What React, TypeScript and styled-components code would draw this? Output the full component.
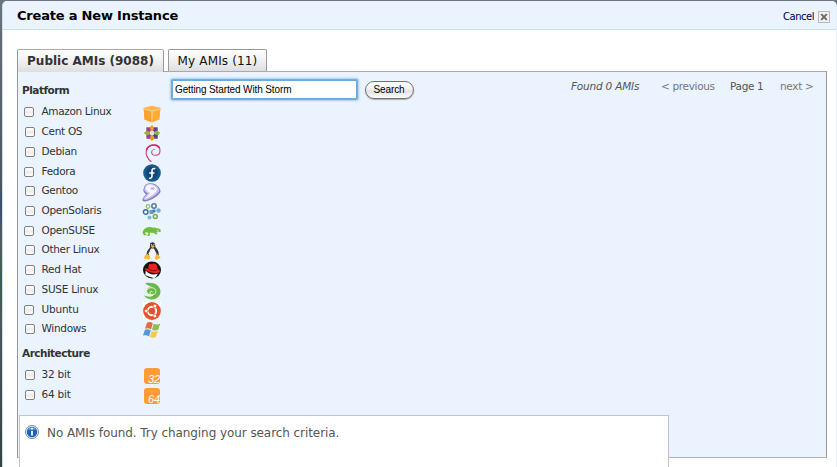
import React from "react";
import styled, { createGlobalStyle } from "styled-components";

const GlobalStyle = createGlobalStyle`
  * { box-sizing: border-box; }
  html, body { margin: 0; padding: 0; overflow: hidden; }
  body { background: #fff; font-family: "DejaVu Sans", Verdana, sans-serif; }
`;

const Backdrop = styled.div`
  width: 837px;
  height: 467px;
  padding: 1px 1px 0 2px;
  overflow: hidden;
  background: linear-gradient(#6b7580 0, #686b70 40px, #50565e 180px, #3c4d6c 205px, #565a5d 240px, #3e6047 280px, #505558 330px, #34443d 467px);
`;

const Dialog = styled.div`
  height: 466px;
  width: 834px;
  background: #fff;
  border-left: 1px solid #c5e0f5;
  border-radius: 5px 5px 0 0;
  box-shadow: 1px 0 0 #e4eef6;
`;

const Header = styled.header`
  display: flex;
  align-items: center;
  justify-content: space-between;
  height: 29px;
  padding: 1px 6px 0 14px;
  background: #eaf3fe;
  border-bottom: 1px solid #c5e0f5;
  border-radius: 5px 5px 0 0;
`;

const Title = styled.h1`
  margin: 0;
  font-size: 13px;
  line-height: 18px;
  letter-spacing: -0.2px;
  color: #000;
`;

const Cancel = styled.button`
  display: flex;
  align-items: center;
  gap: 4px;
  padding: 2px 0 0;
  border: 0;
  background: none;
  font: 10px/14px "DejaVu Sans", sans-serif;
  letter-spacing: -0.5px;
  color: #00004a;
`;

const CloseBox = styled.span`
  display: flex;
  align-items: center;
  justify-content: center;
  width: 12px;
  height: 12px;
  background: #f1f0ee;
  border: 1px solid #b9b9b9;
`;

const Content = styled.main`
  padding: 19px 8px 0 14px;
`;

const Tabs = styled.nav`
  display: flex;
  gap: 4px;
  height: 22px;
`;

const Tab = styled.button<{ $active?: boolean }>`
  width: ${(p) => (p.$active ? 147 : 99)}px;
  height: ${(p) => (p.$active ? 23 : 22)}px;
  padding: ${(p) => (p.$active ? 0 : 1)}px 0 0;
  border: 1px solid #999;
  border-top-color: ${(p) => (p.$active ? "#f2a12e" : "#999")};
  border-bottom: 0;
  border-radius: 2px 2px 0 0;
  background: linear-gradient(#fff, #f2f2f2 45%, #dedede);
  font: ${(p) => (p.$active ? "bold" : "normal")} 12px/18px "DejaVu Sans", sans-serif;
  letter-spacing: ${(p) => (p.$active ? "0" : "0.15px")};
  white-space: nowrap;
  color: ${(p) => (p.$active ? "#333" : "#111")};
`;

const Panel = styled.section`
  width: 810px;
  height: 387px;
  border: 1px solid #999;
  border-top-color: #aaa;
  border-bottom-color: #b2b2b7;
  background: #eaf3fe;
`;

const Columns = styled.div`
  display: flex;
  height: 343px;
`;

const Sidebar = styled.aside`
  width: 152px;
  padding: 10px 0 0 4px;
`;

const GroupTitle = styled.h2<{ $spaced?: boolean }>`
  margin: ${(p) => (p.$spaced ? "6px 0 3px" : "0 0 3px")};
  height: 17px;
  font-size: 10.5px;
  line-height: 17px;
  letter-spacing: -0.5px;
  color: #333;
`;

const Option = styled.label`
  display: grid;
  grid-template-columns: 19.5px 101.5px 18px;
  grid-template-rows: 19.73px;
  align-items: center;
  height: 19.73px;
  font-size: 10.5px;
  line-height: 19px;
  color: #333;
`;

const Checkbox = styled.input<{ $shift: number }>`
  appearance: none;
  width: 10px;
  height: 10px;
  margin: 1px 0 0 ${(p) => 2 + p.$shift}px;
  border: 1px solid #818181;
  border-radius: 2px;
  background: linear-gradient(#fff, #ececec 55%, #fff);
`;

const Label = styled.span<{ $spacing: number }>`
  letter-spacing: ${(p) => p.$spacing}px;
  white-space: nowrap;
`;

const Icon = styled.svg<{ $drop: number }>`
  display: block;
  width: 18px;
  height: 18px;
  margin: ${(p) => p.$drop}px 0 ${(p) => -p.$drop}px;
  overflow: visible;
`;

const Results = styled.div`
  display: flex;
  flex: 1;
  align-items: flex-start;
  padding-top: 8px;
`;

const SearchInput = styled.input`
  width: 185px;
  height: 19px;
  margin-left: 2px;
  padding: 0 2px;
  border: 1px solid #6ea9dc;
  outline: 0;
  border-radius: 1px;
  background: #fff;
  box-shadow: 0 0 0 1px #73aee0, 0 0 2px 2px #a5cdee;
  font: 10px "Liberation Sans", Arial, sans-serif;
  letter-spacing: -0.12px;
  color: #000;
`;

const SearchButton = styled.button`
  width: 49px;
  height: 18px;
  margin: 1px 0 0 7.5px;
  padding: 0;
  border: 1px solid #717171;
  border-radius: 9px;
  background: linear-gradient(#fff, #efefef 48%, #e2e2e2 55%, #fbfbfb);
  box-shadow: 0 1px 1px #aaa;
  font: 10px/14px "Liberation Sans", Arial, sans-serif;
  letter-spacing: -0.1px;
  color: #000;
`;

const Pager = styled.div`
  display: grid;
  grid-template-columns: 90px 69px 50px 33px;
  margin: -1px 13px 0 auto;
  font-size: 10.5px;
  line-height: 15px;
  letter-spacing: -0.33px;
  white-space: nowrap;
  color: #555;
`;

const Found = styled.em`
  letter-spacing: -0.2px;
`;

const PageLink = styled.span`
  color: #777;
`;

const Message = styled.div`
  display: flex;
  align-items: flex-start;
  width: 650px;
  height: 70px;
  margin-left: 1px;
  padding: 9px 0 0 5px;
  gap: 8px;
  border: 1px solid #c4c4c4;
  background: #fff;
  font-size: 12px;
  line-height: 17px;
  letter-spacing: -0.07px;
  color: #555;
`;

const BitBadge = styled.span`
  width: 16px;
  height: 16px;
  margin: 3px 0 -1px 1px;
  padding: 5px 0 0 4px;
  overflow: hidden;
  border-radius: 3px;
  background: #ff9c35;
  font: italic 11px/12px "Liberation Sans", Arial, sans-serif;
  color: #fff;
`;

const centPetals = ["#f0a522", "#6b3f91", "#8db83b", "#454b91", "#e4a12c", "#a84088", "#8db83b", "#a84088"];

const glyphs: Record<string, React.ReactNode> = {
  amazon: (
    <>
      <path d="m.5 3 8.5-2 8.5 2-1 11.5L9 17.5 1.5 14.5Z" fill="#ffab35" />
      <path d="m.5 3 8.5-2 8.5 2L9 5.5Z" fill="#ffb74a" />
      <path d="m1 4 7.5 2v11.2l-7-2.7Z" fill="#fba22d" />
      <path d="m1 4 8 2 8-2M9 6v11" stroke="#ffe1b0" strokeWidth=".8" fill="none" />
    </>
  ),
  cent: (
    <>
      <path fill="#fff" d="m9 0 3 2h4v4l2 3-2 3v4h-4l-3 2-3-2H2v-4L0 9l2-3V2h4Z" />
      {centPetals.map((color, index) => (
        <path key={index} d="m9 .8 2.6 2.8L9.6 7.2H8.4L6.4 3.6Z" fill={color} transform={`rotate(${index * 45} 9 9)`} />
      ))}
      <path d="M7 7h4v4H7z" fill="#e7dcea" opacity=".9" />
    </>
  ),
  debian: (
    <>
      <path d="M8 17.5C5 15 2.7 12 3.2 7.5 3.6 3.5 7 .8 11 1c3.5.2 6 2.3 6 5.5 0 3-2 4.8-4.5 4.8-2.7 0-4.2-1.5-3.8-3.4" fill="none" stroke="#d83a76" strokeWidth="1.1" strokeLinecap="round" />
      <path d="M3.5 6C4.5 3 7.5 1 11 1c2.5 0 4.5 1 5.5 3" fill="none" stroke="#d4286b" strokeWidth="1.6" />
      <path d="M8.7 8c.2-1.7 1.5-3 3.2-2.5" fill="none" stroke="#df5d8d" />
    </>
  ),
  fedora: (
    <>
      <circle cx="9" cy="9" r="8.8" fill="#17598c" />
      <circle cx="9" cy="9" r="6" fill="#114778" />
      <path d="M12.3 4.8C10 4 9 5.2 9 7v5c0 2-1.4 2.5-2.8 2M6.3 9h5.2" fill="none" stroke="#fff" strokeWidth="1.6" />
    </>
  ),
  gentoo: (
    <>
      <path d="M1 5C1 1 6-.5 10 .5c4 1 8 5 7.5 8.5C15.5 13 7 18.5 1 18.5c-3-1-1-4 2-7C1 9.5-.5 8 1 5Z" fill="#817bbb" />
      <path d="M1.5 5C2 1 7 0 10 1.2c3.5 1 6.8 4 6.4 6.7C14 12 6 17 1.2 17c-2-1 .8-3.8 3.8-6.5C2.5 9.5.5 7.5 1.5 5Z" fill="#c5c1ee" />
      <path d="M2.5 5C4 1.5 7 1 10 2.2c3 1.3 4.5 3 4 5C12 11 6 14.5 2 16c1-2 3.5-4 5.5-6C4.5 9 2.5 7.5 2.5 5Z" fill="#f6f5ff" />
      <ellipse cx="9.5" cy="5.5" rx="2" ry="1.2" fill="#b9b4e2" />
    </>
  ),
  solaris: (
    <>
      <circle cx="5" cy="3.5" r="1.8" fill="none" stroke="#9abd66" strokeWidth="1.2" />
      <circle cx="11" cy="3" r="2.2" fill="none" stroke="#547d94" strokeWidth="1.5" />
      <circle cx="2.7" cy="9" r="2.3" fill="none" stroke="#397096" strokeWidth="1.4" />
      <path d="M6.5 7h4v4h-4z" fill="#426e99" opacity=".7" />
      <circle cx="15.5" cy="7.5" r="2.2" fill="#70b0dd" />
      <circle cx="11" cy="8" r="1.7" fill="#4187b5" />
      <circle cx="6.5" cy="14.5" r="2" fill="#7db8df" />
      <circle cx="12.3" cy="13.5" r="2" fill="none" stroke="#7cab46" strokeWidth="1.5" />
    </>
  ),
  opensuse: (
    <>
      <path d="M0 8C2 4 7 3 11 5l1-1 1 1.5c3-1 5 1 5 3-2 1-4 0-5 1.5 2 0 2 2 0 1.5L11 10l-4-.5L6.5 13H4l1.5-2c0-2-3.5-2.5-3.5-.5l2 1-2 1C0 12-1 10 0 8Z" fill="#6fbd38" />
      <circle cx="15" cy="7.7" r=".9" fill="#e5f7da" />
      <circle cx="15.2" cy="7.7" r=".4" fill="#244b1c" />
    </>
  ),
  tux: (
    <>
      <path d="M7.2 1c3.6-2 5.3.3 5.2 4.2 3 2.6 4 6 3 9.8H3.8c-1-3.3.2-6.5 3-9.3Z" fill="#35373a" />
      <path d="m8 6.5-2.4 4.8 1 4.7 3 1 3-1 .9-4.5-2.6-5Z" fill="#f3f3f3" />
      <path d="m7.7 4.4 2.1-1.1 2 1-2 1.6ZM4 11.5l3 3 .4 2-2.1 1.3L.5 16l1.5-2.5ZM14 11.7l3.7 3.8-4 2.5-2.3-2Z" fill="#f4bd38" />
      <path d="M8.4 2.2v1.3M10.9 2.2v1.1" stroke="#fff" strokeWidth=".9" />
    </>
  ),
  redhat: (
    <>
      <ellipse cx="9" cy="9" rx="9" ry="8.5" fill="#111" />
      <path d="M2.7 9.6c3 4.2 8.5 4.6 12 3.2-.5 2-1.7 3.2-3.8 4.4C8.5 16.3 6.5 15.5 2.3 14.2Z" fill="#fff" />
      <path d="M1.5 8c1-1 2.5-.8 3.5-.2L6 3.4c1-1.3 2.4.2 3.3-.2.9-1.4 4-.3 4.5 1L14.7 8c3 1.5 2.8 3.6-.7 4C9.5 12.5 4 10.7 1.5 8Z" fill="#ed2024" />
      <path d="M5 7.7c2.7 2.1 6 2.6 9.2 1.1" stroke="#68090d" strokeWidth=".8" fill="none" />
    </>
  ),
  suse: (
    <>
      <path d="M2.3 1C10-.5 17.5 3 17.5 9.5c0 6.7-8 10-14 6.6L1 13.5c5.3 2 9.3 1.3 10.2-1.8C9 13.5 4.5 12.2 4 9.8 3.2 7 5.2 5 9 4.5 6.2 4.2 4 3.5 2.3 1Z" fill="#69b944" />
      <path d="M3.5 9.5C3.7 6.7 6.6 5.2 9.5 5.8c3.5.7 4.3 4.5 2 6.2-1.7 1.4-4.5.8-4.6-1.1 0-1.6 2.1-2 2.7-.8" fill="none" stroke="#eaf6e4" strokeWidth="1" />
    </>
  ),
  ubuntu: (
    <>
      <path d="M0 0h18v18H0z" fill="#fff" />
      <circle cx="9" cy="9" r="8.9" fill="#e6512c" />
      <circle cx="9" cy="9" r="4.2" fill="none" stroke="#fff" strokeWidth="1.9" />
      {[30, 150, 270].map((angle) => (
        <g key={angle} transform={`rotate(${angle} 9 9)`}>
          <path d="M9 3v4" stroke="#e6512c" />
          <circle cx="9" cy="3.3" r="1.8" fill="#fff" stroke="#e6512c" strokeWidth=".7" />
        </g>
      ))}
    </>
  ),
  windows: (
    <>
      <path d="M4 1.7C6 .5 8 1 9.8 2.2L8 8.5C6 7 4 7 2 7.8Z" fill="#e76b3c" />
      <path d="M10.7 2.8c2 1 4 1 6.5 0l-2 6c-2 1-4 1-6.2 0Z" fill="#91bd4b" />
      <path d="M1.8 8.9c2-1 4-.5 6 .7l-1.8 6c-2-1.5-4-1.7-6-1Z" fill="#5897d7" />
      <path d="M8.7 10c2 1 4 1 6.2 0l-2 6c-2 1-4 1-6 0Z" fill="#f3c950" />
    </>
  ),
};

const platforms = [
  { label: "Amazon Linux", icon: "amazon", spacing: -0.35, drop: 2, shift: 0 },
  { label: "Cent OS", icon: "cent", spacing: -0.3, drop: 1, shift: 1 },
  { label: "Debian", icon: "debian", spacing: -0.3, drop: 1.5, shift: 1 },
  { label: "Fedora", icon: "fedora", spacing: -0.3, drop: 1.5, shift: 0 },
  { label: "Gentoo", icon: "gentoo", spacing: -0.3, drop: 1, shift: 1 },
  { label: "OpenSolaris", icon: "solaris", spacing: -0.3, drop: 2, shift: 1 },
  { label: "OpenSUSE", icon: "opensuse", spacing: -0.3, drop: 1.5, shift: 0 },
  { label: "Other Linux", icon: "tux", spacing: -0.32, drop: 1.5, shift: 1 },
  { label: "Red Hat", icon: "redhat", spacing: -0.25, drop: 0.5, shift: 1 },
  { label: "SUSE Linux", icon: "suse", spacing: -0.25, drop: 2, shift: 1 },
  { label: "Ubuntu", icon: "ubuntu", spacing: -0.2, drop: 1.5, shift: 0 },
  { label: "Windows", icon: "windows", spacing: -0.3, drop: 1.5, shift: 1 },
];

function InfoIcon() {
  return (
    <svg width="14" height="14" viewBox="0 0 14 14">
      <circle cx="7" cy="7" r="6.5" fill="#e8eef5" stroke="#7e8b9b" />
      <circle cx="7" cy="7" r="5.2" fill="#1763c1" />
      <path d="M3 5a4.5 4.5 0 0 1 8 0C8 4 6 4 3 5Z" fill="#7baee0" />
      <path d="M7 5.8v4.8M7 2.7v1.8" fill="none" stroke="#fff" strokeWidth="1.8" />
    </svg>
  );
}

export default function App() {
  return (
    <>
      <GlobalStyle />
      <Backdrop>
        <Dialog>
          <Header>
            <Title>Create a New Instance</Title>
            <Cancel>
              Cancel
              <CloseBox>
                <svg width="8" height="8" viewBox="0 0 8 8">
                  <path d="m1.2 1.2 5.6 5.6m0-5.6L1.2 6.8" stroke="#666" strokeWidth="1.8" />
                </svg>
              </CloseBox>
            </Cancel>
          </Header>
          <Content>
            <Tabs>
              <Tab $active>Public AMIs (9088)</Tab>
              <Tab>My AMIs (11)</Tab>
            </Tabs>
            <Panel>
              <Columns>
                <Sidebar>
                  <GroupTitle>Platform</GroupTitle>
                  {platforms.map((item) => (
                    <Option key={item.label}>
                      <Checkbox type="checkbox" $shift={item.shift} />
                      <Label $spacing={item.spacing}>{item.label}</Label>
                      <Icon $drop={item.drop} viewBox="0 0 18 18">{glyphs[item.icon]}</Icon>
                    </Option>
                  ))}
                  <GroupTitle $spaced>Architecture</GroupTitle>
                  {["32", "64"].map((bits) => (
                    <Option key={bits}>
                      <Checkbox type="checkbox" $shift={1} />
                      <Label $spacing={-0.2}>{bits} bit</Label>
                      <BitBadge>{bits}</BitBadge>
                    </Option>
                  ))}
                </Sidebar>
                <Results>
                  <SearchInput defaultValue="Getting Started With Storm" />
                  <SearchButton>Search</SearchButton>
                  <Pager>
                    <Found>Found 0 AMIs</Found>
                    <PageLink>&lt; previous</PageLink>
                    <span>Page 1</span>
                    <PageLink>next &gt;</PageLink>
                  </Pager>
                </Results>
              </Columns>
              <Message>
                <InfoIcon />
                No AMIs found. Try changing your search criteria.
              </Message>
            </Panel>
          </Content>
        </Dialog>
      </Backdrop>
    </>
  );
}
